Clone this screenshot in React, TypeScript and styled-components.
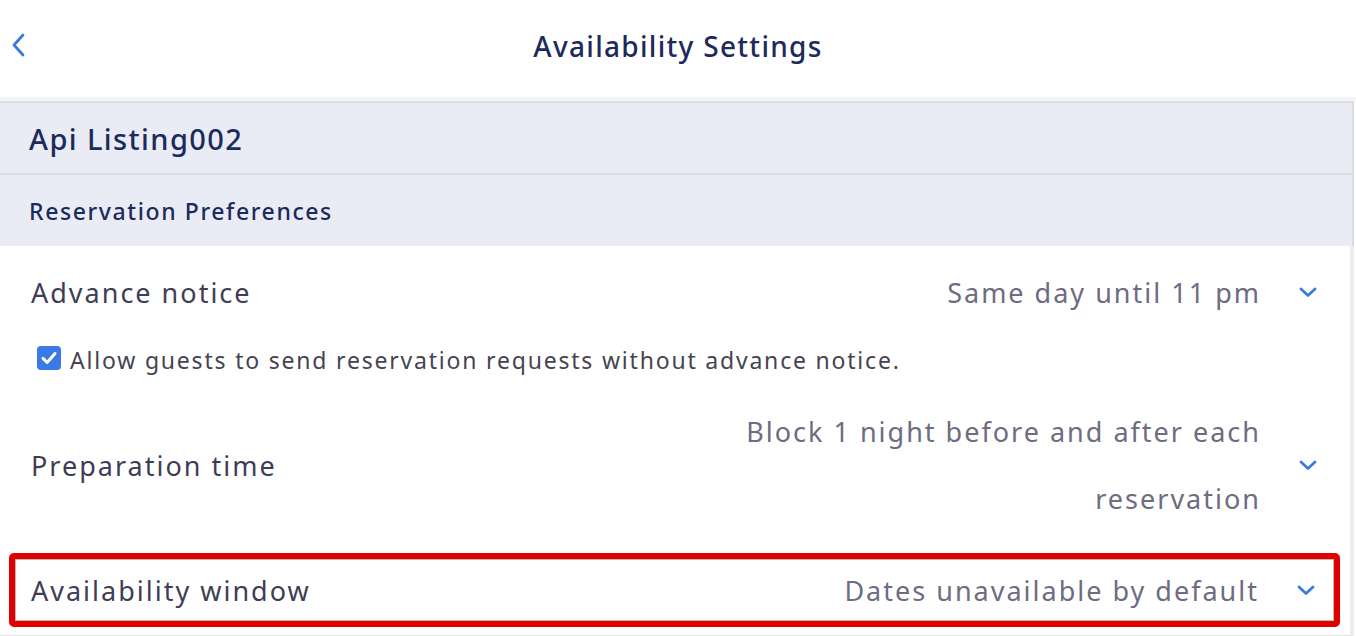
import * as React from "react";
import styled, { createGlobalStyle } from "styled-components";

const GlobalStyle = createGlobalStyle`
  html, body {
    margin: 0;
    padding: 0;
    background: #ffffff;
  }
  body {
    font-family: "Noto Sans", "Open Sans", sans-serif;
    -webkit-font-smoothing: antialiased;
  }
`;

const Page = styled.div`
  width: 1356px;
  height: 636px;
  overflow: hidden;
  background: #ffffff;
`;

const Header = styled.div`
  height: 97px;
  display: grid;
  grid-template-columns: 1fr auto 1fr;
  align-items: center;
`;

const BackButton = styled.button`
  justify-self: start;
  border: none;
  background: transparent;
  padding: 0 0 0 8px;
  margin-top: -8px;
  display: flex;
  cursor: pointer;
  color: #3a7bdc;
`;

const Title = styled.h1`
  margin: -6px 0 0;
  font-size: 28px;
  font-weight: 500;
  color: #1c2a5c;
  letter-spacing: 1.3px;
`;

const Strip = styled.div`
  height: 4px;
  background: #f4f4f6;
`;

const Sections = styled.div`
  width: 1352px;
  border-right: 2px solid #dcdcdf;
  border-top: 2px solid #dcdcdf;
`;

const Section = styled.div<{ $big?: boolean }>`
  height: ${(p) => (p.$big ? 70 : 71)}px;
  display: flex;
  align-items: center;
  padding-left: 29px;
  background: #e9ecf5;
  color: #1c2a5c;
  font-size: ${(p) => (p.$big ? 29 : 23)}px;
  font-weight: 500;
  letter-spacing: ${(p) => (p.$big ? 1.4 : 1.6)}px;
  border-bottom: ${(p) => (p.$big ? "2px solid #dcdcdf" : "none")};
`;

const Card = styled.div`
  width: 1350px;
  border-right: 4px solid #ececee;
  background: #ffffff;
  padding-bottom: 8px;
  border-bottom: 2px solid #e2e2e4;
`;

const Row = styled.div<{ $h: number }>`
  height: ${(p) => p.$h}px;
  display: flex;
  align-items: center;
  padding: 0 30px 0 31px;
`;

const Label = styled.div`
  flex: 1;
  font-size: 27px;
  color: #3f3d55;
  letter-spacing: 2px;
`;

const Value = styled.div<{ $tall?: boolean }>`
  font-size: 27px;
  color: #6d6c80;
  text-align: right;
  letter-spacing: 2px;
  line-height: ${(p) => (p.$tall ? "67px" : "normal")};
  max-width: 560px;
`;

const Chevron = styled.span`
  width: 24px;
  margin-left: 35px;
  display: flex;
  color: #3a7bdc;
`;

const CheckRow = styled.label`
  height: 44px;
  display: flex;
  align-items: center;
  gap: 9px;
  padding-left: 37px;
  font-size: 23px;
  letter-spacing: 1.8px;
  color: #454452;
  margin-bottom: 16px;
`;

const Box = styled.span`
  width: 24px;
  height: 24px;
  border-radius: 4px;
  background: #3b78e8;
  display: flex;
  align-items: center;
  justify-content: center;
  margin-top: -4px;
`;

const Highlight = styled.div`
  margin: 21px 10px 0 9px;
  border: 6px solid #e00000;
  border-radius: 5px;
`;

const InnerRow = styled(Row)`
  padding: 0 15px 0 15px;
  border: 1px solid #b9b9bf;
`;

function ChevronDown() {
  return (
    <svg width="24" height="24" viewBox="0 0 24 24" fill="none" stroke="currentColor" strokeWidth="2.8" strokeLinecap="round" strokeLinejoin="round">
      <polyline points="5 9 12 15.5 19 9" />
    </svg>
  );
}

function SettingRow({ label, value, h, tall }: { label: string; value: React.ReactNode; h: number; tall?: boolean }) {
  return (
    <Row $h={h}>
      <Label>{label}</Label>
      <Value $tall={tall}>{value}</Value>
      <Chevron>
        <ChevronDown />
      </Chevron>
    </Row>
  );
}

export default function App() {
  return (
    <Page>
      <GlobalStyle />
      <Header>
        <BackButton aria-label="Back">
          <svg width="22" height="28" viewBox="0 0 22 28" fill="none" stroke="currentColor" strokeWidth="2.8" strokeLinecap="round" strokeLinejoin="round">
            <polyline points="15 4 6 14 15 24" />
          </svg>
        </BackButton>
        <Title>Availability Settings</Title>
        <span />
      </Header>
      <Strip />
      <Sections>
        <Section $big>Api Listing002</Section>
        <Section>Reservation Preferences</Section>
      </Sections>
      <Card>
        <SettingRow label="Advance notice" value="Same day until 11 pm" h={92} />
        <CheckRow>
          <Box>
            <svg width="18" height="18" viewBox="0 0 24 24" fill="none" stroke="#ffffff" strokeWidth="4" strokeLinecap="round" strokeLinejoin="round">
              <polyline points="4 12.5 9.5 18 20 6" />
            </svg>
          </Box>
          Allow guests to send reservation requests without advance notice.
        </CheckRow>
        <SettingRow
          label="Preparation time"
          value={
            <>
              Block 1 night before and after each
              <br />
              reservation
            </>
          }
          h={134}
          tall
        />
        <Highlight>
          <InnerRow $h={60}>
            <Label>Availability window</Label>
            <Value>Dates unavailable by default</Value>
            <Chevron>
              <ChevronDown />
            </Chevron>
          </InnerRow>
        </Highlight>
      </Card>
    </Page>
  );
}
